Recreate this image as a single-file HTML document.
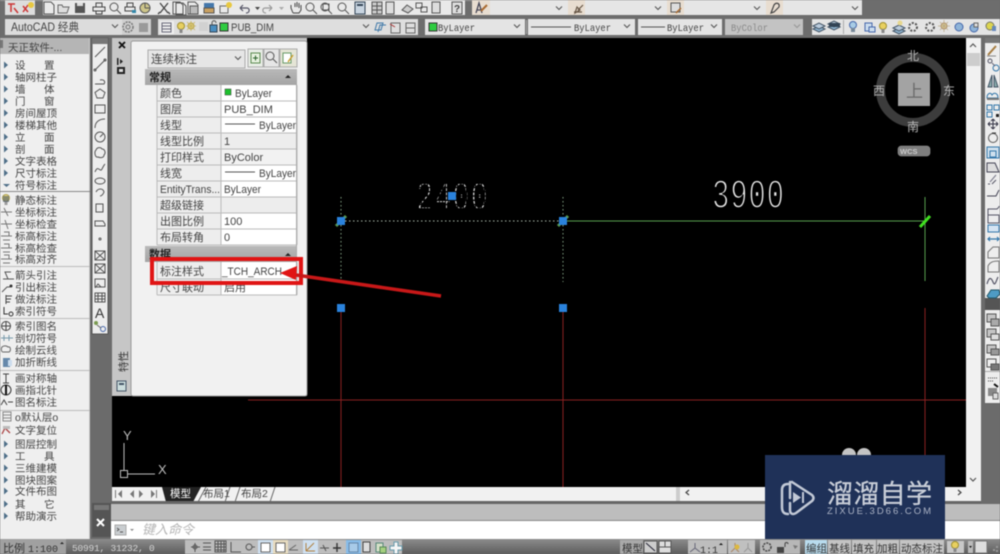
<!DOCTYPE html>
<html><head><meta charset="utf-8"><style>
html,body{margin:0;padding:0;background:#6b6b6b;width:1000px;height:554px;overflow:hidden}
svg{display:block;position:absolute;left:0;top:0;filter:blur(.4px)}
text{font-family:"Liberation Sans","Noto Sans CJK SC",sans-serif;font-size:11px;fill:#444}
.m{font-family:"Liberation Mono","Noto Sans CJK SC",monospace}
.p text{font-size:10.5px}
.i *{fill:none;stroke:#555;stroke-width:1}
.b *{fill:none;stroke:#3f78a8;stroke-width:1}
</style></head><body>
<svg width="1000" height="554" viewBox="0 0 1000 554">
<defs>
<linearGradient id="st" x1="0" y1="0" x2="0" y2="1"><stop offset="0" stop-color="#8c8c8c"/><stop offset="1" stop-color="#5d5d5d"/></linearGradient>
<linearGradient id="hd" x1="0" y1="0" x2="0" y2="1"><stop offset="0" stop-color="#b9b9b9"/><stop offset="1" stop-color="#a4a4a4"/></linearGradient>
<pattern id="dots" width="3" height="3" patternUnits="userSpaceOnUse"><rect width="2" height="2" fill="#ddd"/></pattern>
<g id="doc" class="i"><path d="M-5-6h7l3 3v9h-10z"/></g>
<g id="bx" class="i"><rect x="-5" y="-5" width="10" height="10"/><path d="M-2-2h4v4h-4z"/></g>
<g id="mag" class="i"><circle cx="-1" cy="-1" r="4"/><path d="M2 2l4 4"/></g>
<g id="bulb"><circle cx="0" cy="-2" r="3.5" fill="#e8d060" stroke="#a09030"/><rect x="-1.500" y="1" width="3" height="4" fill="#888"/></g>
<g id="lay"><path d="M-6 1l6-3 6 3-6 3z" fill="#8fb4d0" stroke="#456"/><path d="M-6-2l6-3 6 3-6 3z" fill="#bcd" stroke="#456"/></g>
<path id="ar" d="M-3-1.500l3 3 3-3" fill="none" stroke="#555" stroke-width="1.100"/>
<path id="tri" d="M-2-3.500l4 3.500-4 3.500z" fill="#4f6f88"/>
</defs>

<!-- top bars -->
<rect width="1000" height="38" fill="#6d6d6d"/>
<rect x="0" y="0" width="862" height="1" fill="#999"/>
<rect x="5" y="0" width="30" height="15" fill="#ddd"/>
<rect x="43" y="0" width="422" height="15" fill="#e9e9e9"/>
<rect x="472" y="0" width="390" height="15" fill="#e6e6e6"/>
<rect x="472" y="0" width="18" height="15" fill="#e8ddd0"/>
<rect x="568" y="0" width="17" height="15" fill="#e8ddd0"/><rect x="667" y="0" width="17" height="15" fill="#e8ddd0"/><rect x="766" y="0" width="17" height="15" fill="#e8ddd0"/>
<rect x="5" y="19" width="146" height="16" fill="#dcdcdc"/>
<rect x="122" y="19" width="29" height="16" fill="#cfcfcf"/>
<rect x="158" y="19" width="260" height="16" fill="#dedede"/>
<rect x="425" y="19" width="100" height="16" fill="#e4e4e4"/>
<rect x="528" y="19" width="107" height="16" fill="#e4e4e4"/>
<rect x="638" y="19" width="84" height="16" fill="#e4e4e4"/>
<rect x="725" y="19" width="78" height="16" fill="#c3c3c3"/>
<rect x="812" y="19" width="188" height="16" fill="#e4e4e4"/>

<!-- row1 icons -->
<g transform="translate(0,8)">
<path d="M8-4h7M11-4v8M14 0l4 5" stroke="#c33" stroke-width="1.500" fill="none"/>
<path d="M23-2l5 6M23 4l5-7" stroke="#c33" stroke-width="1.500" fill="none"/><circle cx="31" cy="-3" r="3" fill="#e8c840"/>
<use href="#doc" x="49"/><path d="M58-3h4l1 2h6l-2 6h-9z" fill="#ddd" stroke="#666"/><rect x="75" y="-5" width="10" height="10" fill="#555"/><rect x="77" y="-5" width="6" height="3" fill="#ddd"/>
<path d="M93-1h12v4h-12zM96-1v-4h6v4M96 3v3h6v-3" fill="none" stroke="#444"/>
<use href="#mag" x="115"/><path d="M125-1h10v4h-10zM127-1v-4h6v4" fill="none" stroke="#444"/><rect x="132" y="2" width="4" height="3" fill="#38a"/>
<circle cx="145" cy="0" r="5" fill="#cdc58a" stroke="#555"/><path d="M145 0v-5M145 0h5" stroke="#555"/>
<path d="M160-5l8 10M168-5l-8 10M160 4l-2 2M168 4l2 2" stroke="#444" fill="none" stroke-width="1.300"/>
<use href="#doc" x="178"/><use href="#doc" x="181" y="1"/><use href="#doc" x="193"/><rect x="190" y="-2" width="8" height="8" fill="#bbb" stroke="#555"/>
<rect x="204" y="-5" width="10" height="5" fill="#47a" /><path d="M204 0h10v5h-10z" fill="#c9a060" stroke="#555"/>
<rect x="220" y="-2" width="8" height="7" fill="none" stroke="#666"/><circle cx="229" cy="-3" r="3" fill="#e8c840"/>
<path d="M240 0l3-3M240 0l3 3M240 0h7c3 0 3 5-1 5" fill="none" stroke="#556" stroke-width="1.200"/><path d="M255-1h5l-2.500 3z" fill="#444"/>
<path d="M272 0l-3-3M272 0l-3 3M272 0h-7c-3 0-3 5 1 5" fill="none" stroke="#999" stroke-width="1.200"/><path d="M279-1h5l-2.500 3z" fill="#aaa"/>
<path d="M293 5l-2-5v-3M295-5v4M297-6v5M299-5v5M301-3v5l-2 3h-6" fill="none" stroke="#444"/>
<use href="#mag" x="311"/><use href="#mag" x="326"/><rect x="323" y="-4" width="6" height="6" fill="none" stroke="#555"/><use href="#mag" x="343"/>
<rect x="355" y="-6" width="10" height="12" fill="#c8d4e0" stroke="#345"/><rect x="357" y="-4" width="6" height="2" fill="#345"/>
<rect x="372" y="-6" width="10" height="12" fill="#ccc" stroke="#555"/><path d="M372-2h10M372 2h10M377-6v12" stroke="#555"/>
<rect x="386" y="-6" width="8" height="12" fill="#ddd" stroke="#555"/>
<path d="M402 2l5-5 6 4-5 4z" fill="#ccc" stroke="#555"/><rect x="416" y="-5" width="6" height="5" fill="none" stroke="#555"/><rect x="421" y="-1" width="6" height="5" fill="none" stroke="#555"/>
<rect x="432" y="-6" width="8" height="11" fill="#ddd" stroke="#555"/><rect x="452" y="-6" width="10" height="12" fill="#ddd" stroke="#555"/><text x="454" y="4" font-size="10" font-weight="700" style="font-size:10px">?</text>
<path d="M476 5l3-10 3 10M477 2h4" stroke="#445" fill="none" stroke-width="1.300"/><path d="M481 3l6-6" stroke="#a86a30" stroke-width="2"/>
<path d="M577-1l3 3-5 3zM574 4h8M578 2l5-5" stroke="#654" stroke-width="1.200" fill="none" transform="translate(0,0)"/>
<rect x="671" y="-5" width="9" height="9" fill="#ddd" stroke="#555"/><path d="M676 5l5-5" stroke="#a86a30" stroke-width="1.500"/>
<path d="M771 5l3-8c2-3 6-2 5 2l-5 5z" fill="none" stroke="#444" stroke-width="1.200"/>
<use href="#ar" x="559"/><use href="#ar" x="658"/><use href="#ar" x="757"/><use href="#ar" x="855"/>
</g>

<!-- row2 content -->
<text x="11" y="31" style="font-size:11.5px" textLength="68" lengthAdjust="spacingAndGlyphs">AutoCAD 经典</text>
<use href="#ar" x="115" y="26"/>
<circle cx="128" cy="27" r="5" fill="none" stroke="#777" stroke-dasharray="2 1" stroke-width="1.500"/><circle cx="128" cy="27" r="2" fill="none" stroke="#777"/>
<rect x="139" y="23" width="9" height="9" fill="#999"/>
<rect x="160" y="21" width="14" height="13" fill="#eee"/><rect x="162" y="23" width="9" height="9" fill="none" stroke="#667"/><path d="M162 26h9M162 29h9" stroke="#667"/>
<use href="#bulb" x="181" y="28"/><circle cx="191" cy="26" r="3" fill="#e6d78e" stroke="#b7a040"/><path d="M186 26h10M191 21v10M187 22l8 8M195 22l-8 8" stroke="#c8b560" stroke-width=".8"/>
<rect x="199" y="22" width="9" height="9" fill="#ccc" opacity=".7"/><rect x="210" y="25" width="7" height="7" fill="#4a8ec0" stroke="#345"/><path d="M212 25v-2c0-3 4-3 4 0" fill="none" stroke="#555"/>
<rect x="220" y="23" width="8" height="8" fill="#2ecc40" stroke="#333"/>
<text x="231" y="31" style="font-size:11px" textLength="43" lengthAdjust="spacingAndGlyphs">PUB_DIM</text>
<use href="#ar" x="366" y="26"/>
<g class="b"><path d="M375 30l2-7h6l-2 7zM378 32l2-7h6"/></g><rect x="391" y="23" width="9" height="10" fill="none" stroke="#666"/><path d="M390 24l5 3" stroke="#a33"/>
<rect x="406" y="23" width="9" height="10" fill="none" stroke="#666"/><path d="M406 28h9" stroke="#666"/>
<rect x="429" y="23" width="8" height="8" fill="#2ecc40" stroke="#333"/>
<text class="m" x="438" y="31" style="font-size:10.500px" textLength="37" lengthAdjust="spacingAndGlyphs">ByLayer</text><use href="#ar" x="517" y="26"/>
<rect x="526" y="20" width="1" height="14" fill="#aaa"/>
<path d="M531 27h40" stroke="#555"/><text class="m" x="574" y="31" style="font-size:10.500px" textLength="37" lengthAdjust="spacingAndGlyphs">ByLayer</text><use href="#ar" x="627" y="26"/>
<path d="M641 27h24" stroke="#555"/><text class="m" x="667" y="31" style="font-size:10.500px" textLength="37" lengthAdjust="spacingAndGlyphs">ByLayer</text><use href="#ar" x="714" y="26"/>
<text class="m" x="731" y="31" style="font-size:10.500px;fill:#8a8a8a" textLength="37" lengthAdjust="spacingAndGlyphs">ByColor</text><use href="#ar" x="797" y="26" opacity=".4"/>
<use href="#lay" x="819" y="28"/><use href="#lay" x="834" y="26"/><rect x="829" y="23" width="11" height="4" fill="#345"/>
<rect x="843" y="20" width="1" height="14" fill="#aaa"/>
<circle cx="853" cy="25" r="3.500" fill="#a8cbe5" stroke="#46a"/><rect x="851" y="28" width="4" height="4" fill="#789"/>
<path d="M865 23h7v8h-7z" fill="#cde" stroke="#46a"/><rect x="869" y="27" width="6" height="5" fill="#cde" stroke="#46a"/>
<use href="#bulb" x="883" y="28"/><use href="#lay" x="899" y="30"/><circle cx="900" cy="23" r="2.500" fill="#e6d78e"/>
<circle cx="913" cy="27" r="4" fill="none" stroke="#555" stroke-width="2" stroke-dasharray="2 1.500"/><circle cx="930" cy="27" r="4" fill="none" stroke="#555" stroke-width="2" stroke-dasharray="2 1.500"/>
<circle cx="944" cy="26" r="3" fill="#e6d78e" stroke="#a86"/><path d="M938 26h12M944 20v12M940 22l8 8M948 22l-8 8" stroke="#ba8" stroke-width=".8"/>
<circle cx="959" cy="27" r="4" fill="#8fb4d8" stroke="#46a"/><circle cx="974" cy="28" r="4" fill="#8fb4d8" stroke="#46a"/><rect x="974" y="23" width="4" height="4" fill="#ddd" stroke="#666"/>
<circle cx="990" cy="26" r="4" fill="#dcd550" stroke="#776"/><rect x="992" y="26" width="4" height="5" fill="#68b"/>

<!-- canvas -->
<rect x="112" y="38" width="854" height="450" fill="#000"/>

<!-- left panel -->
<rect x="0" y="38" width="90" height="501" fill="#efefef"/>
<rect x="0" y="38" width="90" height="16" fill="#b5b5b5"/>
<rect x="0" y="40" width="3" height="8" fill="#777"/>
<rect x="89" y="38" width="1" height="501" fill="#ccc"/>
<text x="8" y="51" style="font-size:10.500px">天正软件-...</text>
<g class="p" text-rendering="geometricPrecision">
<text x="15" y="69">设</text><text x="44" y="69">置</text>
<text x="15" y="81">轴网柱子</text>
<text x="15" y="93">墙</text><text x="44" y="93">体</text>
<text x="15" y="105">门</text><text x="44" y="105">窗</text>
<text x="15" y="117">房间屋顶</text>
<text x="15" y="129">楼梯其他</text>
<text x="15" y="141">立</text><text x="44" y="141">面</text>
<text x="15" y="153">剖</text><text x="44" y="153">面</text>
<text x="15" y="165">文字表格</text>
<text x="15" y="177">尺寸标注</text>
<text x="15" y="189">符号标注</text>
<text x="15" y="204">静态标注</text>
<text x="15" y="216">坐标标注</text>
<text x="15" y="228">坐标检查</text>
<text x="15" y="240">标高标注</text>
<text x="15" y="252">标高检查</text>
<text x="15" y="263">标高对齐</text>
<text x="15" y="279">箭头引注</text>
<text x="15" y="291">引出标注</text>
<text x="15" y="303">做法标注</text>
<text x="15" y="315">索引符号</text>
<text x="15" y="330">索引图名</text>
<text x="15" y="342">剖切符号</text>
<text x="15" y="354">绘制云线</text>
<text x="15" y="366">加折断线</text>
<text x="15" y="382">画对称轴</text>
<text x="15" y="394">画指北针</text>
<text x="15" y="406">图名标注</text>
<text x="15" y="421">o默认层o</text>
<text x="15" y="434">文字复位</text>
<text x="15" y="448">图层控制</text>
<text x="15" y="460">工</text><text x="44" y="460">具</text>
<text x="15" y="472">三维建模</text>
<text x="15" y="484">图块图案</text>
<text x="15" y="495">文件布图</text>
<text x="15" y="508">其</text><text x="44" y="508">它</text>
<text x="15" y="520">帮助演示</text>
</g>
<use href="#tri" x="6" y="65"/><use href="#tri" x="6" y="77"/><use href="#tri" x="6" y="89"/><use href="#tri" x="6" y="101"/><use href="#tri" x="6" y="113"/><use href="#tri" x="6" y="125"/><use href="#tri" x="6" y="137"/><use href="#tri" x="6" y="149"/><use href="#tri" x="6" y="161"/><use href="#tri" x="6" y="173"/>
<path d="M3 184h7l-3.500 3z" fill="#4f6f88"/>
<use href="#tri" x="6" y="444"/><use href="#tri" x="6" y="456"/><use href="#tri" x="6" y="468"/><use href="#tri" x="6" y="480"/><use href="#tri" x="6" y="491"/><use href="#tri" x="6" y="504"/><use href="#tri" x="6" y="516"/>
<rect y="191" width="90" height="1" fill="#888"/><rect y="266" width="90" height="1" fill="#bbb"/><rect y="318" width="90" height="1" fill="#bbb"/><rect y="370" width="90" height="1" fill="#bbb"/><rect y="410" width="90" height="1" fill="#bbb"/>
<use href="#bulb" x="6" y="200" transform="translate(0,0)" opacity=".8"/><rect x="3" y="196" width="6" height="6" fill="#456" opacity=".6"/>
<path d="M1 212h11M4 208l4 8M1 224h11M5 220l3 9M1 236h11M4 232h5v4M3 240h7M1 248h11M4 244h5v4M3 252h7M1 259h11M4 255h5v4M3 263h7" stroke="#777" fill="none"/>
<path d="M3 279h11M8 279l-3-7 6 0" fill="none" stroke="#555"/><path d="M2 292l5-5h3" fill="none" stroke="#555"/><circle cx="11" cy="286" r="1.500" fill="#333"/>
<path d="M6 295v9M6 296h6M6 299h5M6 302h4" stroke="#444" fill="none"/><path d="M4 307v7h4" stroke="#333" fill="none"/><circle cx="11" cy="314" r="2" fill="none" stroke="#333"/>
<circle cx="6" cy="326" r="4.500" fill="none" stroke="#444"/><path d="M1 326h10M6 321v10" stroke="#444"/>
<path d="M1 338h12M4 335v6M9 335v6" stroke="#79a" fill="none"/><path d="M2 347c2-2 5-1 6 0 3-1 3 4 1 5h-6c-2 0-2-4-1-5z" fill="none" stroke="#666"/>
<rect x="3" y="358" width="7" height="9" fill="#68a" /><rect x="8" y="360" width="4" height="6" fill="#cde"/>
<path d="M6 374v9M3 374h6M3 383h6" stroke="#444"/><circle cx="6" cy="390" r="5" fill="none" stroke="#333"/><path d="M6 385v10" stroke="#111" stroke-width="2"/>
<path d="M1 405l3-5 3 5M8 402h5" stroke="#444" fill="none"/>
<rect x="3" y="412" width="8" height="9" fill="none" stroke="#888"/><path d="M3 415h8M3 418h8" stroke="#888"/><path d="M2 434l3-6 5 5" fill="none" stroke="#a44" stroke-width="1.300"/><rect x="3" y="426" width="7" height="3" fill="#bbb"/>

<!-- draw toolbar -->
<rect x="92" y="38" width="16" height="296" fill="#ededed" stroke="#555"/>
<rect x="92" y="38" width="16" height="6" fill="#777"/>
<g class="i" transform="translate(100,0)">
<path d="M-5 57l10-10"/><path d="M-5 70l10-10"/><circle cx="-5" cy="70" r="1" /><circle cx="5" cy="60" r="1"/>
<path d="M-5 84h9c2-3-1-5-4-4"/><path d="M0 89l5 3.500-2 5.500h-6l-2-5.500z"/><rect x="-5" y="105" width="10" height="8"/>
<path d="M-5 128c0-6 4-9 10-9"/><circle cx="0" cy="137" r="5"/><path d="M0 137l3-3"/>
<path d="M-4 150c1-3 5-3 6-1 3 0 4 4 2 6 0 3-4 3-6 2-3 1-4-5-2-7z"/>
<path d="M-5 172c3-8 5 1 7-3s2-4 3-5"/><ellipse cx="0" cy="181" rx="5" ry="3"/><path d="M-4 192c2-4 7-4 8 0-1 3-3 4-4 4"/>
<path d="M-4 204h7v8h-7z"/><path d="M-5 221h8l2 3v2h-10z"/><circle cx="0" cy="239" r="1" /><rect x="-5" y="251" width="10" height="9"/><path d="M-5 251l10 9M5 251l-10 9"/>
<rect x="-5" y="264" width="10" height="9"/><path d="M-5 264l10 9M5 264l-10 9"/><path d="M-5 279h10v8h-10z"/><path d="M-5 288l3-4 3 3"/>
<rect x="-5" y="293" width="10" height="9"/><path d="M-5 296h10M-5 299h10M-2 293v9M2 293v9"/>
</g>
<text x="95" y="318" style="font-size:14px;fill:#333">A</text>
<circle cx="96" cy="323" r="2" fill="#7a9a50"/><circle cx="103" cy="329" r="2.500" fill="none" stroke="#46a"/><path d="M97 325l4 3" stroke="#666"/>

<!-- cmd close strip -->
<rect x="92" y="503" width="19" height="34" fill="#555"/>
<path d="M97 519l7 7M104 519l-7 7" stroke="#fff" stroke-width="2"/>
<rect x="94" y="505" width="15" height="5" fill="#777"/>

<!-- properties panel -->
<rect x="112" y="38" width="195" height="358" fill="#c6c6c6"/>
<rect x="131" y="41" width="176" height="355" rx="2" fill="#f1f1f1" stroke="#999"/>
<path d="M119 42l6 6M125 42l-6 6" stroke="#111" stroke-width="1.800"/>
<path d="M117 58h1.500v7H117zM120 59l3 2.500-3 2.500z" fill="#222"/><rect x="117" y="67" width="8" height="7" fill="#222"/><rect x="119" y="69" width="4" height="3" fill="#ddd"/>
<text transform="translate(127,372) rotate(-90)" style="font-size:10.500px;fill:#333">特性</text>
<rect x="117" y="381" width="9" height="10" fill="#cdd" stroke="#456"/><rect x="119" y="383" width="5" height="2" fill="#456"/>
<rect x="148" y="50" width="97" height="18" fill="#e6e6e6" stroke="#aaa"/>
<text x="151" y="63" style="font-size:11.500px">连续标注</text><use href="#ar" x="238" y="58"/>
<rect x="248" y="49" width="15" height="18" fill="#e9eee6" stroke="#aaa"/><rect x="251" y="53" width="9" height="10" fill="#e8f2e0" stroke="#5a8a50"/><path d="M253 58h5M255.500 55.500v5" stroke="#286028"/>
<rect x="264" y="49" width="15" height="18" fill="#e6e6e6" stroke="#aaa"/><use href="#mag" x="271" y="57"/>
<rect x="280" y="49" width="17" height="18" fill="#e5e5d6" stroke="#aaa"/><rect x="283" y="53" width="8" height="10" fill="#fff" stroke="#696"/><path d="M288 62l5-7" stroke="#c9a030" stroke-width="1.500"/>
<rect x="145" y="69" width="152" height="16" fill="url(#hd)"/>
<text x="149" y="81" style="font-size:11px;fill:#222;font-weight:700">常规</text>
<path d="M285 78h6l-3-3z" fill="#222"/>
<rect x="157" y="85" width="140" height="160" fill="#fff"/>
<rect x="157" y="85" width="64" height="160" fill="#ededed"/>
<g fill="#ededed"><rect x="221" y="133" width="76" height="16"/><rect x="221" y="197" width="76" height="16"/><rect x="221" y="149" width="76" height="16" fill="#f2f2f2"/></g>
<path d="M157 101h140M157 117h140M157 133h140M157 149h140M157 165h140M157 181h140M157 197h140M157 213h140M157 229h140M157 245h140M221 85v160M297 85v160M157 85v160" stroke="#bbb" fill="none"/>
<text x="160" y="97">颜色</text><text x="160" y="113">图层</text><text x="160" y="129">线型</text><text x="160" y="145">线型比例</text><text x="160" y="161">打印样式</text><text x="160" y="177">线宽</text><text x="160" y="193" style="font-size:11px" textLength="60" lengthAdjust="spacingAndGlyphs">EntityTrans...</text><text x="160" y="209">超级链接</text><text x="160" y="225">出图比例</text><text x="160" y="241">布局转角</text>
<rect x="225" y="89" width="6" height="6" fill="#1cc02c" stroke="#333" stroke-width=".5"/>
<text x="235" y="97" textLength="37" lengthAdjust="spacingAndGlyphs">ByLayer</text><text x="224" y="113">PUB_DIM</text>
<path d="M225 124h30M225 172h30" stroke="#555"/>
<text x="259" y="129" textLength="37" lengthAdjust="spacingAndGlyphs">ByLayer</text><text x="224" y="145">1</text><text x="224" y="161">ByColor</text><text x="259" y="177" textLength="37" lengthAdjust="spacingAndGlyphs">ByLayer</text><text x="224" y="193" textLength="37" lengthAdjust="spacingAndGlyphs">ByLayer</text><text x="224" y="225">100</text><text x="224" y="241">0</text>
<rect x="145" y="246" width="152" height="16" fill="url(#hd)"/>
<text x="149" y="258" style="fill:#222;font-weight:700">数据</text><path d="M285 256h6l-3-3z" fill="#222"/>
<rect x="157" y="262" width="140" height="33" fill="#fff"/><rect x="157" y="262" width="64" height="33" fill="#ededed"/>
<path d="M157 279h140M157 295h140M221 262v33M297 262v33M157 262v33" stroke="#bbb" fill="none"/>
<text x="160" y="275">标注样式</text><text x="160" y="291">尺寸联动</text>
<text x="222" y="275" textLength="60" lengthAdjust="spacingAndGlyphs">_TCH_ARCH</text><text x="224" y="291">启用</text>
<rect x="296" y="85" width="1" height="210" fill="#aaa"/>

<!-- drawing -->
<path d="M341 197v85M563 197v85" stroke="#7fa080" stroke-width="1" stroke-dasharray="1.500 2.500"/>
<path d="M341 221h222" stroke="#a9b8a9" stroke-width="1" stroke-dasharray="1.500 2.500"/>
<path d="M563 221h362M925 197v84" stroke="#56a04f" stroke-width="1"/>
<path d="M920 227l10-11" stroke="#40e020" stroke-width="3"/>
<path d="M336 226l10-10M558 226l10-10" stroke="#5a9a50" stroke-width="3"/>
<path d="M341 308v180M563 308v180M925 308v180" stroke="#8a2020" stroke-width="1"/>
<path d="M248 400h718" stroke="#8a2020" stroke-width="1"/>
<g fill="#2a82dc"><rect x="337" y="217" width="8" height="8"/><rect x="559" y="217" width="8" height="8"/><rect x="448" y="192" width="8" height="8"/><rect x="337" y="304" width="8" height="8"/><rect x="559" y="304" width="8" height="8"/></g>
<text class="m" transform="translate(416,209.500) scale(1,1.420)" textLength="72" lengthAdjust="spacing" style="font-size:29px;fill:url(#dots);stroke:#000;stroke-width:1.300;paint-order:fill stroke">2400</text>
<rect x="448" y="192" width="8" height="8" fill="#2a82dc"/>
<text class="m" transform="translate(712,207.500) scale(1,1.420)" textLength="72" lengthAdjust="spacing" style="font-size:29px;fill:#e8e8e8;stroke:#000;stroke-width:1.100;paint-order:fill stroke">3900</text>

<!-- compass -->
<circle cx="913" cy="90" r="32.500" fill="none" stroke="#3c3c3c" stroke-width="9"/>
<rect x="898" y="73" width="32" height="33" fill="#a3a3a3"/>
<text x="906" y="97" style="font-size:17px;fill:#6a6a6a">上</text>
<g style="font-size:12px"><text x="907" y="60" style="fill:#b5b5b5;font-size:12px">北</text><text x="907" y="131" style="fill:#b5b5b5;font-size:12px">南</text><text x="873" y="95" style="fill:#b5b5b5;font-size:12px">西</text><text x="943" y="95" style="fill:#b5b5b5;font-size:12px">东</text></g>
<rect x="898" y="146" width="32" height="10" rx="3" fill="#7e7e7e" stroke="#999" stroke-width=".5"/>
<text x="900" y="154" style="font-size:7.500px;fill:#ccc;font-weight:700">WCS</text>

<!-- UCS -->
<path d="M124 443v27M128 474h27" stroke="#bbb" fill="none"/><rect x="120.500" y="470.500" width="7" height="7" fill="none" stroke="#bbb"/>
<text x="123" y="440" style="font-size:13px;fill:#bbb">Y</text><text x="158" y="474" style="font-size:13px;fill:#bbb">X</text>

<!-- right scrollbar + toolbar -->
<rect x="966" y="38" width="15" height="450" fill="#f1f1f1"/>
<rect x="967" y="53" width="13" height="13" fill="#cdcdcd"/>
<path d="M970 47l3-3 3 3M970 478l3 3 3-3" fill="none" stroke="#555" stroke-width="1.200"/>
<rect x="985" y="38" width="15" height="365" fill="#ededed"/>
<rect x="985" y="38" width="15" height="5" fill="#777"/><rect x="985" y="298" width="15" height="12" fill="#555"/>
<g transform="translate(993,0)">
<path d="M-5 55l8-9" stroke="#a67c40" stroke-width="2"/><path d="M-6 56h9" stroke="#888"/>
<circle cx="-3" cy="61" r="2" fill="none" stroke="#556"/><circle cx="3" cy="68" r="3" fill="none" stroke="#37a"/><path d="M-1 63l3 3" stroke="#667"/>
<path d="M-1 75l-4 12h4zM1 75l4 12h-4z" fill="#8aa" stroke="#456"/>
<path d="M-6 98c0-5 4-6 5-3 2-3 6-2 6 3z" fill="none" stroke="#37a"/><rect x="-6" y="98" width="12" height="2" fill="#777"/>
<rect x="-6" y="105" width="5" height="5" fill="none" stroke="#37a"/><rect x="1" y="105" width="5" height="5" fill="none" stroke="#37a"/><rect x="-6" y="112" width="5" height="5" fill="none" stroke="#37a"/><rect x="3" y="114" width="3" height="3" fill="#222"/>
<path d="M-5 124h10M0 119v10M-5 124l2-2M-5 124l2 2M5 124l-2-2M5 124l-2 2M0 119l-2 2M0 119l2 2M0 129l-2-2M0 129l2-2" stroke="#334" fill="none"/>
<circle cx="0" cy="138" r="4.500" fill="none" stroke="#555"/><path d="M-1 133h4" stroke="#333"/>
<rect x="-6" y="147" width="12" height="11" fill="#cfe0ee" stroke="#37a"/><rect x="-3" y="151" width="6" height="6" fill="none" stroke="#37a"/>
<path d="M-6 172v-9h8l4 9z" fill="#ddd" stroke="#445"/><path d="M-3 182l6-7" stroke="#778"/>
<path d="M-5 184h2M-1 184l4-4" stroke="#556"/><path d="M-6 196h9l3-6" fill="none" stroke="#445"/>
<path d="M-5 215v-6h9l2-2v-1" fill="none" stroke="#556"/>
<rect x="-5" y="215" width="11" height="8" fill="none" stroke="#556"/>
<rect x="-5" y="225" width="11" height="7" fill="#d5e4f2" stroke="#37a"/>
<path d="M-5 239h11M-3 237l-2 2 2 2M4 237l2 2-2 2" fill="none" stroke="#37a" stroke-width="1.200"/>
<path d="M-5 258v-6l5-5h6v11z" fill="#eee" stroke="#777"/><path d="M-5 272v-6c2-4 5-5 11-5v11z" fill="#eee" stroke="#777"/>
<path d="M-6 284c2-7 4-7 6-2s3-1 5-5" fill="none" stroke="#556" stroke-width="1.200"/>
<path d="M-6 296l4-6h8l1 4-4 4h-7z" fill="#4e9bc4" stroke="#256"/>
</g>
<g fill="#c4c4c4" stroke="#555"><rect x="987" y="314" width="9" height="8"/><rect x="991" y="319" width="8" height="7" fill="#aaa"/><rect x="987" y="329" width="9" height="8"/><rect x="991" y="334" width="8" height="6" fill="#ddd"/><rect x="987" y="345" width="9" height="8"/><rect x="991" y="349" width="8" height="6" fill="#999"/><rect x="987" y="359" width="9" height="8" fill="#eee"/><rect x="991" y="364" width="8" height="6" fill="#777"/></g>
<rect x="985" y="371" width="15" height="1" fill="#aaa"/>
<path d="M988 378h9M988 381h6" stroke="#444" stroke-dasharray="1 1"/><path d="M994 384l4 3" stroke="#111" stroke-width="2"/><rect x="988" y="388" width="9" height="8" fill="#888"/><rect x="993" y="393" width="5" height="6" fill="#ddd" stroke="#666"/>

<!-- tabs bar -->
<rect x="112" y="487" width="869" height="15" fill="#f1f1f1"/>
<g fill="#777"><rect x="115" y="490" width="1" height="8"/><path d="M122 490v8l-4-4zM134 490v8l-4-4zM139 490v8l4-4zM151 490v8l4-4z" transform="translate(0,0)"/><rect x="156" y="490" width="1" height="8"/></g>
<path d="M162 487h39l-8 15h-27z" fill="#222"/>
<text x="170" y="497" style="fill:#fff;font-size:10.500px">模型</text>
<path d="M198 502l8-15M230 487l-5 15M235 502l5-15M275 487l-5 15" stroke="#666" fill="none"/>
<text x="203" y="497" style="font-size:10.500px">布局1</text><text x="241" y="497" style="font-size:10.500px">布局2</text>
<rect x="676" y="487" width="4" height="15" fill="#ccc"/>
<path d="M689 490l-3 2.500 3 2.500M958 490l3 2.500-3 2.500" fill="none" stroke="#444" stroke-width="1.200" transform="translate(0,0)"/>
<rect x="111" y="501" width="870" height="3" fill="#666"/>

<!-- command -->
<rect x="111" y="504" width="889" height="16" fill="#bdbdbd"/>
<rect x="111" y="520" width="889" height="1" fill="#888"/>
<rect x="111" y="521" width="889" height="18" fill="#fff"/>
<rect x="981" y="38" width="4" height="466" fill="#6b6b6b"/>
<rect x="981" y="404" width="19" height="100" fill="#6b6b6b"/>
<rect x="115" y="525" width="11" height="10" fill="#c9cdd0" stroke="#aaa"/><path d="M117 528l2 1.500-2 1.500M120 532h3" stroke="#555" fill="none"/>
<path d="M130 529h4l-2 2z" fill="#888"/>
<text x="142" y="534" style="font-size:13px;fill:#b5b5b5;font-style:italic">键入命令</text>

<!-- status bar -->
<rect x="0" y="539" width="1000" height="15" fill="url(#st)"/>
<rect x="0" y="539" width="66" height="15" fill="#a0a0a0"/>
<text x="3" y="552" style="font-size:11px;fill:#333">比例</text><text class="m" x="28" y="552" style="font-size:10px;fill:#333">1:100</text>
<path d="M60 544h4l-2-2z" fill="#222"/>
<text class="m" x="72" y="551" style="font-size:9.500px;fill:#d5d5d5;letter-spacing:-.2px">50991, 31232, 0</text>
<rect x="185" y="540" width="217" height="14" fill="#bdbdbd"/>
<g fill="none" stroke="#555">
<path d="M191 547h9M195 543v9"/><circle cx="195" cy="547" r="2"/><path d="M203 543h8M203 547h8M203 550h8"/>
<rect x="215" y="541" width="11" height="11"/><path d="M215 544h11M215 547h11M215 550h11M218 541v11M221 541v11M224 541v11"/>
<path d="M231 542v10h10"/><circle cx="249" cy="547" r="3"/><path d="M252 547h3"/>
</g>
<rect x="258" y="540" width="15" height="14" fill="#cfe0f0"/><rect x="261" y="543" width="9" height="9" fill="#fff" stroke="#666"/>
<rect x="273" y="540" width="15" height="14" fill="#e8dcc0"/><rect x="276" y="543" width="9" height="9" fill="#fff" stroke="#666"/>
<path d="M289 550h9M289 550l7-5" stroke="#666" fill="none"/>
<rect x="303" y="540" width="15" height="14" fill="#cfe0f0"/><path d="M306 551l8-8M306 551v-8M306 551h9" stroke="#b08040" fill="none"/>
<path d="M320 548h9M323 545l3 6" stroke="#555"/><path d="M337 543v9M333 548h8" stroke="#333" stroke-width="1.400"/>
<rect x="346" y="540" width="15" height="14" fill="#88bce8"/><rect x="349" y="543" width="9" height="9" fill="#a8cbe8" stroke="#68a"/>
<rect x="363" y="542" width="7" height="10" fill="#ddd" stroke="#444"/>
<rect x="376" y="543" width="7" height="9" fill="#d5e0c8" stroke="#587"/><rect x="380" y="547" width="6" height="6" fill="#a6d080" stroke="#585"/>
<path d="M394 542h4v4h4v4h-4v4h-4v-4h-4v-4h4z" fill="#f5f5f5" stroke="#69a"/>

<rect x="620" y="540" width="23" height="14" fill="#a9a9a9"/>
<text x="622" y="552" style="font-size:10.500px;fill:#333">模型</text>
<rect x="644" y="541" width="13" height="12" fill="#ccc" stroke="#555"/><path d="M646 543l9 8" stroke="#223"/>
<rect x="659" y="541" width="12" height="12" fill="#ddd" stroke="#555"/><path d="M659 547h12M665 541v6" stroke="#555"/>
<rect x="688" y="540" width="39" height="14" fill="#bdbdbd"/>
<path d="M695 543v5l-5 4M695 548l5 4" stroke="#667" fill="none"/><text class="m" x="700" y="553" style="font-size:10px;fill:#333">1:1</text><path d="M719 545h4l-2-2z" fill="#111"/>
<rect x="728" y="540" width="27" height="14" fill="#c0c0c0"/>
<path d="M735 543v5l-4 4M735 548l4 4" stroke="#a86" fill="none"/><circle cx="737" cy="547" r="2.500" fill="#dcb840"/><path d="M748 543v5l-4 4M748 548l4 4" stroke="#999" fill="none"/>
<rect x="760" y="540" width="40" height="14" fill="#b7b7b7"/>
<circle cx="767" cy="547" r="4" fill="none" stroke="#444" stroke-width="1.500" stroke-dasharray="2 1"/>
<rect x="777" y="547" width="7" height="6" fill="#444"/><path d="M785 547v-3c0-2 3-2 3 0" fill="none" stroke="#444"/>
<path d="M795 549l-2-4 5 1z" fill="#777"/>
<rect x="805" y="540" width="22" height="14" fill="#b9dcee"/>
<rect x="828" y="540" width="23" height="14" fill="#c4c4c4"/><rect x="852" y="540" width="24" height="14" fill="#c4c4c4"/><rect x="877" y="540" width="22" height="14" fill="#c4c4c4"/><rect x="900" y="540" width="44" height="14" fill="#c4c4c4"/>
<g style="font-size:10.500px"><text x="806" y="552" style="font-size:10.500px;fill:#333">编组</text><text x="829" y="552" style="font-size:10.500px;fill:#333">基线</text><text x="853" y="552" style="font-size:10.500px;fill:#333">填充</text><text x="877" y="552" style="font-size:10.500px;fill:#333">加粗</text><text x="901" y="552" style="font-size:10.500px;fill:#333">动态标注</text></g>
<rect x="947" y="541" width="17" height="12" fill="#c8c8c8"/><use href="#bulb" x="955" y="547"/>
<rect x="968" y="541" width="5" height="12" fill="#bbb"/><path d="M969 546h3l-1.500 2z" fill="#111"/>
<rect x="975" y="541" width="12" height="12" fill="#dedede" stroke="#777"/>
<rect x="993" y="549" width="2" height="2" fill="#999"/><rect x="996" y="546" width="2" height="2" fill="#999"/><rect x="996" y="550" width="2" height="2" fill="#999"/>

<!-- watermark -->
<ellipse cx="849" cy="455" rx="7" ry="7" fill="#c4c4c4"/><ellipse cx="864" cy="455" rx="7" ry="7" fill="#c4c4c4"/>
<rect x="765" y="455" width="180" height="84" fill="#1f3158"/>
<g fill="none" stroke="#c2c9d6" stroke-width="2.500" stroke-linejoin="round" stroke-linecap="round">
<path d="M788 484c-4 0-6 2-6 6v17c0 5 2 7 6 7"/>
<path d="M792 482l20 13c2 2 2 4 0 6l-16 12c-3 2-6 1-6-3v-7"/>
<path d="M790 498v-16"/>
</g>
<path d="M793 492l8 5.500-8 5.500z" fill="#c2c9d6"/><rect x="802" y="492" width="2" height="11" fill="#c2c9d6"/>
<text x="827" y="503" style="font-size:26px;fill:#c9ced8;stroke:#c9ced8;stroke-width:.3" textLength="105">溜溜自学</text>
<text x="827" y="514" style="font-size:9.500px;fill:#aab2c4" textLength="104">ZIXUE.3D66.COM</text>

<!-- annotation -->
<rect x="152" y="259" width="149" height="24" fill="none" stroke="#e01414" stroke-width="4"/>
<path d="M441 296L296 275" stroke="#c81818" stroke-width="3.500" fill="none"/>
<path d="M280 273l17-7-1 14z" fill="#e01414"/>
</svg>
</body></html>
